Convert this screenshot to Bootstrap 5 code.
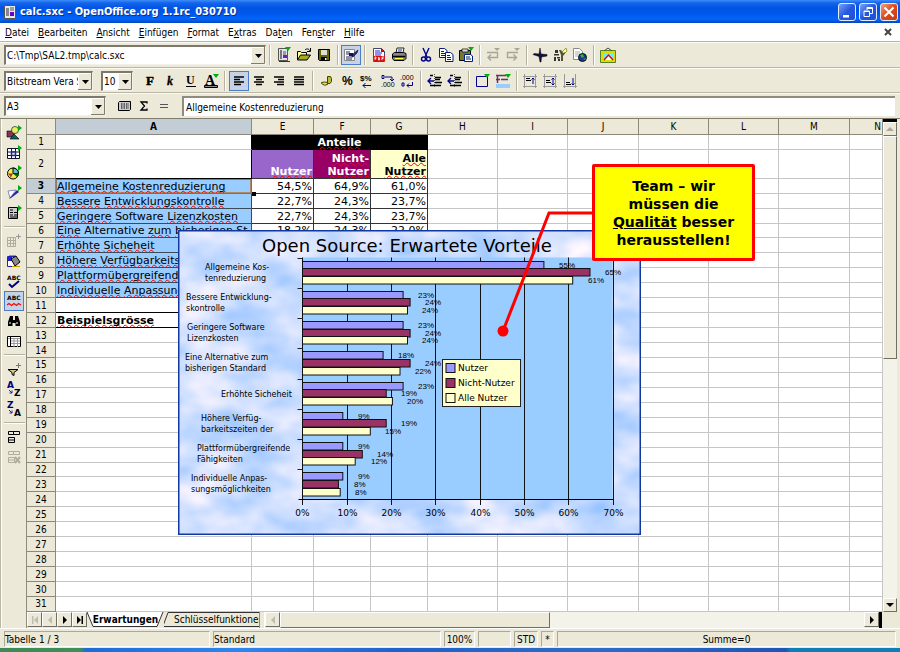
<!DOCTYPE html>
<html lang="de">
<head>
<meta charset="utf-8">
<meta name="viewport" content="width=device-width, initial-scale=1">
<title>calc.sxc - OpenOffice.org 1.1rc_030710</title>
<link rel="stylesheet" href="https://cdn.jsdelivr.net/npm/bootstrap@5.3.0/dist/css/bootstrap.min.css">
<style>
:root{--face:#ece9d8;--lo:#aca899;--ui:"DejaVu Sans Condensed","DejaVu Sans",sans-serif}
body{background:var(--face);font-family:var(--ui);font-size:10px;line-height:13px;color:#000}
button,input,select{font:inherit;color:inherit}
.titlebar{height:23px;background:linear-gradient(#3c8cf8 0,#1464ec 3px,#0054e3 8px,#0058ee 14px,#0366fb 19px,#0148c4 23px);color:#fff;padding:0 2px 0 4px}
.titlebar h1{font-size:11px;line-height:16px;font-weight:bold;text-shadow:1px 1px #0a2f8c;font-family:"DejaVu Sans Condensed",sans-serif}
.wbtn{width:18px;height:18px;border:1px solid #e4edfc;border-radius:3px;padding:0;background:linear-gradient(135deg,#7aa2f4,#2558e0 50%,#1c50d8)}
.wbtn.shut{background:linear-gradient(135deg,#f0a080,#dc4a20 50%,#c43c10)}
.wins{gap:3px}
.menubar{height:19px;background:#fff;border-bottom:1px solid #b8b5a6;padding:0 8px 0 5px}
.menus{gap:9px}
.menubar a{color:#000;text-decoration:none}
.tbar{height:26px;border-bottom:1px solid #bab7a8;border-top:1px solid #fbfaf5;padding-left:4px}
.tbar.mid{height:25px}
.tb{width:20px;height:20px;padding:1px;border:1px solid transparent;background:none;flex:none;display:flex;align-items:center;justify-content:center}
.tb.on{background:#c6d3e6;border-color:#4a7cc8}
.tb svg{width:16px;height:16px;display:block}
.vr2{width:7px;height:20px;flex:none;background:linear-gradient(90deg,transparent 3px,#b5b2a3 3px,#b5b2a3 4px,#fff 4px,#fff 5px,transparent 5px)}
.vr2.w8{width:8px}
.drop{appearance:none;height:20px;border:1px solid;border-color:#7c796c #f4f2e8 #f4f2e8 #7c796c;border-top-width:2px;border-left-width:2px;border-radius:0;padding:0 14px 0 1px;background:#fff url("data:image/svg+xml,%3Csvg xmlns='http://www.w3.org/2000/svg' width='14' height='17'%3E%3Crect width='14' height='17' fill='%23ece9d8'/%3E%3Cpath d='M0.5 17V.5H14' fill='none' stroke='%23fff'/%3E%3Cpath d='M13.500 0V16.500H0' fill='none' stroke='%23807d70'/%3E%3Cpath d='M4 7h7l-3.500 4z'/%3E%3C/svg%3E") right center no-repeat;overflow:hidden;white-space:nowrap}
.w-url{width:262px}.w-face{width:89px}.w-size{width:32px}.w-ref{width:102px}
.fx{height:20px;border:0;border-top:2px solid #8f8c7e;border-left:2px solid #8f8c7e;padding:0 2px;background:#fff;min-width:0;margin-right:5px}
.side{width:27px;padding:4px 0 0 3px;border-left:1px solid #b8b5a6;border-right:1px solid #8f8c7e;box-shadow:inset 1px 0 #fff}
.hr2{height:8px;width:21px;background:linear-gradient(transparent 3px,#b5b2a3 3px,#b5b2a3 4px,#fff 4px,#fff 5px,transparent 5px)}
.work{border-top:1px solid #807d70;min-height:0}
.pane{min-width:0;min-height:0}
.sheetwrap{background:#fff;min-width:0}
.sheet{table-layout:fixed;width:100%;height:100%;border-collapse:separate;border-spacing:0;font-family:"DejaVu Sans",sans-serif;font-size:11px;line-height:13px}
.sheet th,.sheet td{padding:0 1px;border-right:1px solid #c6c6c6;border-bottom:1px solid #c6c6c6;white-space:nowrap;overflow:hidden;vertical-align:bottom;height:14px}
.sheet th{background:var(--face);border-color:#8c897c;text-align:center;font:normal 10px/13px var(--ui);vertical-align:middle}
.sheet thead th{height:16px}
.sheet .sel{background:#c3cdd6;font-weight:bold}
.sheet tr.tall td{height:27px}
.sheet td.area{background:#99ccff;border-color:#3c4a5c}
.sheet td.num{text-align:right;border-color:#333}
.sheet td.hd{font-weight:bold;text-align:right;line-height:13px;border-color:#333}
.sheet td.black{background:#000;color:#fff;text-align:center;border-color:#000}
.sheet td.c1{background:#9966cc;color:#fff}.sheet td.c2{background:#990066;color:#fff}.sheet td.c3{background:#ffffcc}
.sheet td.line{border-bottom-color:#000}
.sheet td.redge{border-right-color:#000}
.sheet td.cursor{box-shadow:inset 0 1px #8a7a6c,inset 1px 0 #8a7a6c,inset -1px -1px #b08a64;border-color:#8a6a50}
.colr{width:29px}.colA{width:196px}.colE{width:62px}.colF{width:57px}.colw{width:70px}.colx{width:71px}
.sp{text-decoration:underline wavy #f00 1px;text-underline-offset:0;text-decoration-skip-ink:none}
.chart{left:151px;top:111px;width:463px;height:305px}
.grip{left:225px;top:73px;width:4px;height:4px;background:#000}
.link{left:0;top:0;width:600px;height:240px;pointer-events:none}
.note{left:565px;top:45px;width:163px;height:97px;background:#ff0;border:3px solid #f00;border-radius:2px;font:bold 14px/18px "DejaVu Sans",sans-serif;text-align:center}
.vs{width:14px;background:#f3f3ea;border-top:3px solid #000}
.sb{width:14px;height:14px;border:1px solid;border-color:#fff #716f64 #716f64 #fff;background:var(--face);padding:0;display:flex;align-items:center;justify-content:center;flex:none}
.sb svg{width:8px;height:8px}
.thumb{border:1px solid;border-color:#fff #716f64 #716f64 #fff;background:var(--face);flex:none}
.vthumb{height:223px}
.hthumb{width:270px}
.tabs{height:16px;background:var(--face)}
.tabs .sb{width:15px;height:15px}
.shtab{border:0;padding:0;background:none;position:relative;height:15px;flex:none}
.shtab svg{position:absolute;left:0;top:0;width:100%;height:100%}
.shtab span{position:relative}
.t1{width:77px;font-weight:bold}.t2{width:95px;overflow:hidden;white-space:nowrap;padding-left:10px}
.split{width:6px;border-left:1px solid #8f8c7e;border-right:1px solid #fff;flex:none}
.track{background:#f3f3ea}
.edge{width:3px;flex:none}
.status{height:20px;padding:1px 4px 1px 4px;gap:3px;border-top:1px solid #fff}
.status>div{border:1px solid;border-color:#aca899 #fff #fff #aca899;height:16px;line-height:16px;white-space:nowrap;flex:none}
.s1{width:206px}.s2{width:228px}.s3{width:31px}.s4{width:33px}.s5{width:24px}.s6{width:13px}
.status .s7{flex:1}
.desk{height:4px;background:linear-gradient(90deg,#3d8a54 0,#3f8f58 80px,#1c6cd6 86px,#2e86ee 240px,#1e62c8 400px,#2c6cc8 600px,#1d56b4 786px,#0e7eb4 790px)}
</style>
<script src="https://cdn.jsdelivr.net/npm/bootstrap@5.3.0/dist/js/bootstrap.bundle.min.js"></script>
</head>
<body class="vh-100 d-flex flex-column overflow-hidden">
<header class="titlebar d-flex align-items-center">
  <svg width="12" height="14" viewBox="0 0 12 14" class="me-1"><path d="M.5.5h11v13H.5z" fill="#e8e8f0" stroke="#555"/><path d="M2 3h3v8H2z" fill="#888"/><path d="M6 3h4M6 5h4" stroke="#555"/><path d="M6 7h4v4H6z" fill="#60c"/></svg>
  <h1 class="m-0 flex-grow-1">calc.sxc - OpenOffice.org 1.1rc_030710</h1>
  <div class="wins d-flex">
    <button class="wbtn" aria-label="Minimieren"><svg class="d-block" width="16" height="16" viewBox="0 0 16 16"><path d="M4 11h6v2.500H4z" fill="#fff"/></svg></button>
    <button class="wbtn" aria-label="Wiederherstellen"><svg class="d-block" width="16" height="16" viewBox="0 0 16 16" fill="none" stroke="#fff"><path d="M4 7h5.500v5.500H4zM4 7.500h5.500M7 6V3.500h5.500V9.500H10M7 4.500h5.500"/></svg></button>
    <button class="wbtn shut" aria-label="Schließen"><svg class="d-block" width="16" height="16" viewBox="0 0 16 16"><path d="M3.500 3.500l9 9m0-9l-9 9" stroke="#fff" stroke-width="2"/></svg></button>
  </div>
</header>
<nav class="menubar d-flex align-items-center">
  <div class="menus d-flex flex-grow-1">
  <a href="#"><u>D</u>atei</a><a href="#"><u>B</u>earbeiten</a><a href="#"><u>A</u>nsicht</a><a href="#"><u>E</u>infügen</a><a href="#"><u>F</u>ormat</a><a href="#">E<u>x</u>tras</a><a href="#">Da<u>t</u>en</a><a href="#">Fen<u>s</u>ter</a><a href="#"><u>H</u>ilfe</a></div>
  <a href="#" aria-label="Dokument schließen"><svg width="8" height="8" viewBox="0 0 8 8" class="d-block"><path d="M1 1l6 6m0-6L1 7" stroke="#444" stroke-width="2"/></svg></a>
</nav>

<div class="tbar d-flex align-items-center">
  <select class="drop w-url" aria-label="URL"><option>C:\Tmp\SAL2.tmp\calc.sxc</option></select><i class="vr2 w8"></i>
  <button class="tb" aria-label="Neu"><svg viewBox="0 0 16 16"><path d="M2.500 1.500h9v12h-9z" fill="#e4e4ec" stroke="#555"/><path d="M4 3h2v9H4z" fill="#777"/><path d="M7 5h3M7 7h3" stroke="#555"/><path d="M7 8h4v3H7z" fill="#62b"/><path d="M3 14.500h11" stroke="#333"/><path d="M9 0h6l-3 4z" fill="#0a1"/></svg></button>
  <button class="tb" aria-label="Öffnen"><svg viewBox="0 0 16 16"><path d="M1.500 13V4.500h3l1 1h5V8" fill="#ff9" stroke="#000"/><path d="M1.500 13l3-5h10l-3.500 5z" fill="#aa2" stroke="#000"/><path d="M9 3c2-2 4-1 5 1M14.500 1v3.500H11" fill="none" stroke="#000"/></svg></button>
  <button class="tb" aria-label="Speichern"><svg viewBox="0 0 16 16"><path d="M2.500 2.500h11v11h-10l-1-1z" fill="#660" stroke="#000"/><path d="M5 3h6v5H5z" fill="#ddd"/><path d="M5 10h6v3.500H5z" fill="#000"/><path d="M9 11h1.500v2H9z" fill="#fff"/></svg></button><i class="vr2"></i>
  <button class="tb on" aria-label="Bearbeiten"><svg viewBox="0 0 16 16"><path d="M1.500 2.500h10v11h-10z" fill="#fff" stroke="#888"/><path d="M3 5h4M3 7h3M3 10h6M3 12h6" stroke="#225"/><path d="M6 6h4v3H6z" fill="#116"/><path d="M9 10l1-3 5-4-1 3-4 4z" fill="#337" stroke="#003" stroke-width=".6"/></svg></button><i class="vr2 w8"></i>
  <button class="tb" aria-label="PDF"><svg viewBox="0 0 16 16"><path d="M2.500 1.500h8l3 3v10h-11z" fill="#fff" stroke="#447"/><path d="M10 1v4h4z" fill="#c00"/><path d="M4 4h5M4 6h7M4 8h6" stroke="#22c"/><path d="M2 9h12v5H2z" fill="#d11"/><path d="M4 13v-3h1v1.500H4M7.500 10v3h1v-2.500M11 13v-3h2m-2 1.500h1.500" stroke="#fff" stroke-width=".8" fill="none"/></svg></button>
  <button class="tb" aria-label="Drucken"><svg viewBox="0 0 16 16"><path d="M5 6l1-5h7l-1 5" fill="#fff" stroke="#222"/><path d="M7 3h4M6.500 5h4" stroke="#22a"/><path d="M1.500 7l2-1.500h9L15 6.500v5l-2 2H3l-1.500-2z" fill="#888" stroke="#000"/><path d="M2 9.500h12" stroke="#000" stroke-width="1.500"/><path d="M4 11h8v1H4z" fill="#ff4"/></svg></button><i class="vr2"></i>
  <button class="tb" aria-label="Ausschneiden"><svg viewBox="0 0 16 16" fill="none" stroke="#00008b" stroke-width="1.400"><path d="M5 1l4 9M11 1L7 10"/><circle cx="5.500" cy="12" r="2"/><circle cx="10.500" cy="12" r="2"/></svg></button>
  <button class="tb" aria-label="Kopieren"><svg viewBox="0 0 16 16" fill="#fff" stroke="#00207c"><path d="M1.500 1.500h5l2.500 2v7H1.500z"/><path d="M3 4.500h3M3 6.500h4M3 8.500h4"/><path d="M7.500 5.500h5l2.500 2v7H7.500z"/><path d="M9 8.500h3M9 10.500h4M9 12.500h4"/></svg></button>
  <button class="tb" aria-label="Einfügen"><svg viewBox="0 0 16 16"><path d="M1.500 3.500h11v10h-11z" fill="#773" stroke="#000"/><path d="M4 2h6v3H4z" fill="#ddd" stroke="#000" stroke-width=".7"/><path d="M6.500 7.500h6l2 1.500v5.500h-8z" fill="#fff" stroke="#002080"/><path d="M8 10h4M8 12h5" stroke="#002080"/><path d="M10 0h6l-3 4z" fill="#0a1"/></svg></button><i class="vr2"></i>
  <button class="tb" aria-label="Rückgängig"><svg viewBox="0 0 16 16" fill="none" stroke="#a8a596" stroke-width="1.400"><path d="M2 5.500h10.500v5H3M6 7.500l-3 3 3 3"/><path d="M9 1h6l-3 3z" fill="#a8a596" stroke="none"/></svg></button>
  <button class="tb" aria-label="Wiederherstellen"><svg viewBox="0 0 16 16" fill="none" stroke="#a8a596" stroke-width="1.400"><path d="M13 5.500H2.500v5H11M8.500 7.500l3 3-3 3"/><path d="M9 1h6l-3 3z" fill="#a8a596" stroke="none"/></svg></button><i class="vr2"></i>
  <button class="tb" aria-label="Navigator"><svg viewBox="0 0 16 16"><path d="M8 1l1 6 6 .5v1.500l-5.500 1L9 15H8L7 9.500 1 7.500 2 6.500l5 .5z" fill="#114" stroke="#000" stroke-width=".5"/></svg></button>
  <button class="tb" aria-label="Stylist"><svg viewBox="0 0 16 16"><path d="M3 3h3v3H3zM2 7h5v1.500H2zM2 10h2v4H2zM5 10h3v1.500H5zM6 12h2v2H6z" fill="#333"/><path d="M10 5l4-4 1 3-4 4z" fill="#ff6" stroke="#773" stroke-width=".7"/><path d="M7 3h2l2 3 3-1-3 4v5H9V8z" fill="#553"/></svg></button>
  <button class="tb" aria-label="Hyperlink"><svg viewBox="0 0 16 16"><path d="M1.500 1.500h6l3 3v8h-9z" fill="#fff" stroke="#888"/><path d="M3 5h5M3 7h5M3 9h3" stroke="#aaa"/><circle cx="10.500" cy="10.500" r="4" fill="#238" stroke="#012"/><path d="M8 8l3-1 1 3-2 1zM11 12l3-1-1 2z" fill="#2b3"/></svg></button><i class="vr2 w8"></i>
  <button class="tb" aria-label="Gallery"><svg viewBox="0 0 16 16"><path d="M4 4l4-3 4 3" fill="none" stroke="#444"/><path d="M2 5h12v9H2z" fill="#6ef" stroke="#dd0" stroke-width="2"/><path d="M4 13l4.500-5 4.500 5" fill="#fff" stroke="#c11" stroke-width="1.500"/><path d="M.5 3.500h15v12H.5z" fill="none" stroke="#360" stroke-width=".8"/></svg></button>
</div>

<div class="tbar mid d-flex align-items-center">
  <select class="drop w-face" aria-label="Schriftart"><option>Bitstream&nbsp;Vera&nbsp;S</option></select>
  <select class="drop w-size mx-2" aria-label="Schriftgröße"><option>10</option></select>
  <button class="tb" aria-label="Fett"><svg viewBox="0 0 16 16"><text x="3" y="12" font-family="Liberation Serif,serif" font-weight="bold" font-size="13" stroke="#000" stroke-width=".5">F</text></svg></button>
  <button class="tb" aria-label="Kursiv"><svg viewBox="0 0 16 16"><text x="4" y="12" font-family="Liberation Serif,serif" font-weight="bold" font-style="italic" font-size="12" stroke="#000" stroke-width=".3">k</text></svg></button>
  <button class="tb" aria-label="Unterstrichen"><svg viewBox="0 0 16 16"><text x="3" y="11" font-family="Liberation Serif,serif" font-weight="bold" font-size="12">U</text><path d="M3 13.500h10" stroke="#000"/></svg></button>
  <button class="tb" aria-label="Zeichenfarbe"><svg viewBox="0 0 16 16"><text x="2" y="12" font-family="Liberation Serif,serif" font-weight="bold" font-size="14">A</text><path d="M1.500 12.500h13v2h-13z" fill="#888" stroke="#000"/><path d="M10 1h6l-3 4z" fill="#0a1"/></svg></button><i class="vr2 w8"></i>
  <button class="tb on" aria-label="Linksbündig"><svg viewBox="0 0 16 16" stroke="#000" stroke-width="1.300"><path d="M3 4h10M3 6.500h6M3 9h10M3 11.500h7"/></svg></button>
  <button class="tb" aria-label="Zentriert"><svg viewBox="0 0 16 16" stroke="#000" stroke-width="1.300"><path d="M3 4h10M5 6.500h6M3 9h10M5 11.500h6"/></svg></button>
  <button class="tb" aria-label="Rechtsbündig"><svg viewBox="0 0 16 16" stroke="#000" stroke-width="1.300"><path d="M3 4h10M7 6.500h6M3 9h10M6 11.500h7"/></svg></button>
  <button class="tb" aria-label="Blocksatz"><svg viewBox="0 0 16 16" stroke="#000" stroke-width="1.300"><path d="M3 4h10M3 6.500h10M3 9h10M3 11.500h10"/></svg></button><i class="vr2 w8"></i>
  <button class="tb" aria-label="Währung"><svg viewBox="0 0 16 16"><path d="M8.500 3.500q4-1 4 2v3q-1 3-4 2z" fill="#bb3" stroke="#440"/><path d="M2.500 9.500q3-1 6 0v2q-3 2-6-1z" fill="#dd5" stroke="#440"/></svg></button>
  <button class="tb" aria-label="Prozent"><svg viewBox="0 0 16 16"><text x="3" y="12" font-family="Liberation Sans,sans-serif" font-weight="bold" font-size="12">%</text></svg></button>
  <button class="tb" aria-label="Standardformat"><svg viewBox="0 0 16 16"><text x="1" y="8" font-family="Liberation Sans,sans-serif" font-weight="bold" font-size="8">$%</text><path d="M4 12.500h8M6.500 10L4 12.500 6.500 15" stroke="#008" fill="none"/></svg></button>
  <button class="tb" aria-label="Dezimalstelle hinzufügen"><svg viewBox="0 0 16 16"><text x="2" y="14" font-family="Liberation Sans,sans-serif" font-size="7">.000</text><path d="M3 2.500h2v3H3zM6 4h7v4M11 6l2 2 2-2" stroke="#008" fill="none"/></svg></button>
  <button class="tb" aria-label="Dezimalstelle löschen"><svg viewBox="0 0 16 16"><text x="1" y="7" font-family="Liberation Sans,sans-serif" font-size="7">.000</text><path d="M3 10h2v3H3zM13.500 9v3.500H8M10 10.500l-2 2 2 2" stroke="#008" fill="none"/></svg></button><i class="vr2 w8"></i>
  <button class="tb" aria-label="Einzug vermindern"><svg viewBox="0 0 16 16"><path d="M8 4.500h6M8 6.500h5M8 9.500h7M3 12.500h11M3 2.500h3" stroke="#000" stroke-width="1.500"/><path d="M1 8h6M4 5L1 8l3 3" stroke="#008" stroke-width="1.300" fill="none"/><path d="M7.500 1v14" stroke="#555" stroke-dasharray="1"/></svg></button>
  <button class="tb" aria-label="Einzug erhöhen"><svg viewBox="0 0 16 16"><path d="M8 4.500h6M8 6.500h5M8 9.500h7M3 12.500h11M3 2.500h3" stroke="#000" stroke-width="1.500"/><path d="M1 8h6M4 5L1 8l3 3" stroke="#008" stroke-width="1.300" fill="none"/><path d="M7.500 1v14" stroke="#555" stroke-dasharray="1"/></svg></button><i class="vr2 w8"></i>
  <button class="tb" aria-label="Umrandung"><svg viewBox="0 0 16 16"><path d="M1.500 3.500h11v10h-11z" fill="none" stroke="#009"/><path d="M9 1h6l-3 4z" fill="#0a1"/></svg></button>
  <button class="tb" aria-label="Hintergrundfarbe"><svg viewBox="0 0 16 16"><path d="M1 11h14v4H1z" fill="#99ccff"/><path d="M1 2.500h10M2.500 2v8M1 6.500h4M6 6.500h7" stroke="#636" stroke-width="1.500"/><path d="M10 1h6l-3 4z" fill="#0a1"/></svg></button><i class="vr2"></i>
  <button class="tb" aria-label="Oben ausrichten"><svg viewBox="0 0 16 16"><path d="M1 3.500h14M1 13.500h14M2.500 1v14M13.500 1v14" stroke="#999"/><path d="M4 5.500h4M4 7.500h5" stroke="#000"/><path d="M11 5v6M9.500 6.500L11 5l1.500 1.500" stroke="#009" fill="none"/></svg></button>
  <button class="tb" aria-label="Mitte ausrichten"><svg viewBox="0 0 16 16"><path d="M1 3.500h14M1 13.500h14M2.500 1v14M13.500 1v14" stroke="#999"/><path d="M4 7.500h4M4 9.500h5" stroke="#000"/><path d="M11 5v7M9.500 6.500L11 5l1.500 1.500M9.500 10.500L11 12l1.500-1.500" stroke="#009" fill="none"/></svg></button>
  <button class="tb" aria-label="Unten ausrichten"><svg viewBox="0 0 16 16"><path d="M1 13.500h14M2.500 1v14M13.500 1v14" stroke="#999"/><path d="M4 9.500h4M4 11.500h5" stroke="#000"/><path d="M11 5v7M9.500 10.500L11 12l1.500-1.500" stroke="#009" fill="none"/></svg></button>
</div>

<div class="tbar mid d-flex align-items-center border-bottom-0">
  <select class="drop w-ref me-2" aria-label="Tabellenbereich"><option>A3</option></select>
  <button class="tb" aria-label="Funktionen"><svg viewBox="0 0 16 16"><path d="M3.500 3.500h11v8l-1 1h-11v-8z" fill="#ccc" stroke="#000"/><path d="M5 6h8M5 8h8M5 10h8" stroke="#000" stroke-dasharray="1.500 1"/></svg></button>
  <button class="tb" aria-label="Summe"><svg viewBox="0 0 16 16"><path d="M11 5.500V4H5l3.500 4L5 12h6v-1.500" fill="none" stroke="#000" stroke-width="1.300"/></svg></button>
  <button class="tb me-2" aria-label="Funktion"><svg viewBox="0 0 16 16"><path d="M4 6.500h8M4 9.500h8" stroke="#555"/></svg></button>
  <input class="fx flex-grow-1" aria-label="Eingabezeile" value="Allgemeine Kostenreduzierung">
</div>

<div class="work d-flex flex-grow-1">
  <aside class="side flex-shrink-0">
    <button class="tb" aria-label="Einfügen"><svg viewBox="0 0 16 16"><path d="M1 6h7v6H1z" fill="#835" stroke="#000" stroke-width=".6"/><circle cx="9" cy="5" r="3.500" fill="#ee6" stroke="#000" stroke-width=".6"/><path d="M4 14l4-5 5 5z" fill="#066" stroke="#000" stroke-width=".6"/><path d="M12 0l4 3-4 3z" fill="#0a1"/></svg></button>
    <button class="tb" aria-label="Zellen einfügen"><svg viewBox="0 0 16 16"><path d="M1.500 3.500h12v10h-12zM5.500 3v11M9.500 3v11M1 7h13M1 10.500h13" fill="#fff" stroke="#113"/><path d="M5.500 7h4v3.500h-4z" fill="#ee8" stroke="#22b" stroke-width="1.500"/><path d="M12 0l4 3-4 3z" fill="#0a1"/></svg></button>
    <button class="tb" aria-label="Objekt einfügen"><svg viewBox="0 0 16 16"><circle cx="7" cy="8.500" r="5.500" fill="#ee4" stroke="#000"/><path d="M7 8.500V3a5.500 5.500 0 015.500 5.500z" fill="#6bd" stroke="#000"/><path d="M7 8.500H1.500a5.500 5.500 0 013 4.800z" fill="#a33"/><path d="M7 8.500L11 12a5 5 0 002-3.500z" fill="#060"/><path d="M12 0l4 3-4 3z" fill="#0a1"/></svg></button>
    <button class="tb" aria-label="Zeichenfunktionen"><svg viewBox="0 0 16 16"><path d="M2 6l8-1-6 8z" fill="#fff" stroke="#88b"/><path d="M3 14l8-9 2 2-8 6z" fill="#22a"/><path d="M12 0l4 3-4 3z" fill="#0a1"/></svg></button>
    <button class="tb" aria-label="Formular"><svg viewBox="0 0 16 16"><path d="M2.500 2.500h9v11h-9z" fill="#ccc" stroke="#000"/><path d="M4 5h3M4 7.500h3M4 10h3M8 7.500h3M8 10h3M4 12h7" stroke="#000"/><path d="M12 0l4 3-4 3z" fill="#0a1"/></svg></button>
    <div class="hr2"></div>
    <button class="tb" aria-label="AutoFormat einfügen"><svg viewBox="0 0 16 16"><path d="M1.500 4.500h8v9h-8zM1 7.500h9M1 10.500h9M4.500 4v10M7.500 4v10" fill="none" stroke="#b0ad9e"/><path d="M10 3.500h5M12.500 1v5" stroke="#999"/></svg></button>
    <button class="tb" aria-label="AutoFormat"><svg viewBox="0 0 16 16"><path d="M1.500 3.500h8v10h-8z" fill="#fff" stroke="#22b"/><path d="M2 4h4v4H2z" fill="#22c"/><path d="M5 6l5-3 4 6-5 4z" fill="#888" stroke="#000"/><path d="M3 2.500h7M6 13.500h8" stroke="#c90"/></svg></button>
    <button class="tb" aria-label="Rechtschreibprüfung"><svg viewBox="0 0 16 16"><text x="1" y="7" font-family="DejaVu Sans,sans-serif" font-weight="bold" font-size="6">ABC</text><path d="M3 11l3 3 7-6" fill="none" stroke="#00007c" stroke-width="2"/></svg></button>
    <button class="tb on" aria-label="Automatische Rechtschreibprüfung"><svg viewBox="0 0 16 16"><text x="1" y="7" font-family="DejaVu Sans,sans-serif" font-weight="bold" font-size="6">ABC</text><path d="M1 12l2-1.500 2.500 2L8 10.500l2.500 2 2-2 2.500 1.500" fill="none" stroke="#f00" stroke-width="1.200"/></svg></button>
    <button class="tb" aria-label="Suchen"><svg viewBox="0 0 16 16"><path d="M4 3h3v4h2V3h3l2 6v4h-4.500v-3h-3v3H2V9z"/><path d="M4 9v2M11 9v2" stroke="#fff"/></svg></button>
    <button class="tb" aria-label="Datenquellen"><svg viewBox="0 0 16 16"><path d="M1.500 3.500h13v10h-13z" fill="#fff" stroke="#000"/><path d="M8 5v9M11.500 5v9M2 5.500h12M5 8h9M5 10.500h9" stroke="#999"/><path d="M4.500 3v11" stroke="#000"/></svg></button>
    <div class="hr2"></div>
    <button class="tb" aria-label="AutoFilter"><svg viewBox="0 0 16 16"><path d="M2 8.500h10l-4 3v3l-2-1v-2z" fill="#cc8" stroke="#000"/><path d="M10 4.500h5M12.500 2v5" stroke="#777"/></svg></button>
    <button class="tb" aria-label="Aufsteigend"><svg viewBox="0 0 16 16" font-family="DejaVu Sans,sans-serif" font-weight="bold" font-size="9"><text x="1" y="7" fill="#00007c">A</text><text x="8" y="15">Z</text><path d="M3 9l3 3M6 9.500V12H3.500" stroke="#22b" fill="none"/></svg></button>
    <button class="tb" aria-label="Absteigend"><svg viewBox="0 0 16 16" font-family="DejaVu Sans,sans-serif" font-weight="bold" font-size="9"><text x="1" y="7" fill="#00007c">Z</text><text x="8" y="15">A</text><path d="M3 9l3 3M6 9.500V12H3.500" stroke="#22b" fill="none"/></svg></button>
    <div class="hr2"></div>
    <button class="tb" aria-label="Gruppierung"><svg viewBox="0 0 16 16" fill="none" stroke="#000"><path d="M2.500 2.500h5v3h-5zM7.500 2.500h6v3h-6zM2.500 8.500h6v5h-6zM2.500 11h6"/></svg></button>
    <button class="tb" aria-label="Gruppierung aufheben"><svg viewBox="0 0 16 16" fill="none" stroke="#b0ad9e"><path d="M2.500 2.500h5v3h-5zM7.500 2.500h6v3h-6zM2.500 8.500h6v5h-6zM2.500 11h6"/><path d="M9 8l5 6m0-6l-5 6" stroke-width="2"/></svg></button>
  </aside>

  <main class="pane d-flex flex-column flex-grow-1">
    <div class="pane d-flex flex-grow-1">
      <div class="sheetwrap position-relative flex-grow-1 overflow-hidden">
        <table class="sheet">
          <colgroup><col class="colr"><col class="colA"><col class="colE"><col class="colF"><col class="colF"><col class="colw"><col class="colw"><col class="colx"><col class="colw"><col class="colw"><col class="colx"><col></colgroup>
          <thead><tr><th></th><th class="sel">A</th><th>E</th><th>F</th><th>G</th><th>H</th><th>I</th><th>J</th><th>K</th><th>L</th><th>M</th><th class="text-end">N</th></tr></thead>
          <tbody id="rows"></tbody>
        </table>
        <div class="grip position-absolute"></div>
        <svg id="chart" class="chart position-absolute" viewBox="0 0 463 305" font-family="DejaVu Sans,sans-serif" role="img" aria-label="Open Source: Erwartete Vorteile">
          <defs><filter id="cloud" x="0" y="0" width="1" height="1" color-interpolation-filters="sRGB"><feTurbulence type="fractalNoise" baseFrequency=".018 .028" numOctaves="3" seed="7"/><feColorMatrix values=".6 0 0 0 .5  .3 0 0 0 .72  0 0 0 0 1  0 0 0 0 1"/></filter></defs>
        </svg>
        <svg class="link position-absolute" viewBox="0 0 600 240"><path d="M566 94h-44L476 212" fill="none" stroke="#f00" stroke-width="3"/><circle cx="476" cy="212" r="5.500" fill="#f00"/></svg>
        <div class="note position-absolute d-flex align-items-center justify-content-center"><div>Team – wir<br>müssen die<br><u>Qualität</u> besser<br>herausstellen!</div></div>
      </div>
      <div class="vs d-flex flex-column flex-shrink-0">
        <button class="sb" aria-label="Nach oben"><svg viewBox="0 0 8 8"><path d="M0 6h8L4 2z" fill="#aca899"/></svg></button>
        <div class="thumb vthumb"></div>
        <button class="sb mt-auto" aria-label="Nach unten"><svg viewBox="0 0 8 8"><path d="M0 2h8L4 6z"/></svg></button>
      </div>
    </div>
    <div class="tabs d-flex">
      <button class="sb" aria-label="Erste Tabelle"><svg viewBox="0 0 8 8"><path d="M1 0h1.500v8H1zM7 0v8L3 4z" fill="#c0bdae"/></svg></button>
      <button class="sb" aria-label="Vorige Tabelle"><svg viewBox="0 0 8 8"><path d="M6 0v8L2 4z" fill="#c0bdae"/></svg></button>
      <button class="sb" aria-label="Nächste Tabelle"><svg viewBox="0 0 8 8"><path d="M2 0v8l4-4z"/></svg></button>
      <button class="sb" aria-label="Letzte Tabelle"><svg viewBox="0 0 8 8"><path d="M5.500 0H7v8H5.500zM1 0v8l4-4z"/></svg></button>
      <button class="shtab t1"><svg viewBox="0 0 77 15" preserveAspectRatio="none"><path d="M0 0l6 14h64l6-14z" fill="#fff"/><path d="M0 0l6 14.500h64L76 0" fill="none" stroke="#333"/></svg><span>Erwartungen</span></button>
      <button class="shtab t2"><svg viewBox="0 0 95 15" preserveAspectRatio="none"><path d="M-1 14L4 .5h91M0 14.500h95" fill="none" stroke="#333"/></svg><span>Schlüsselfunktionen</span></button>
      <div class="split"></div>
      <button class="sb" aria-label="Nach links"><svg viewBox="0 0 8 8"><path d="M6 0v8L2 4z" fill="#c0bdae"/></svg></button>
      <div class="thumb hthumb"></div>
      <div class="track flex-grow-1"></div>
      <button class="sb" aria-label="Nach rechts"><svg viewBox="0 0 8 8"><path d="M2 0v8l4-4z"/></svg></button>
      <div class="bg-black edge"></div><div class="sb border-0"></div>
    </div>
  </main>
  <div class="edge"></div>
</div>
<footer class="status d-flex align-items-center">
  <div class="s1">Tabelle 1 / 3</div><div class="s2">Standard</div><div class="s3 text-center">100%</div><div class="s4"></div><div class="s5 text-center">STD</div><div class="s6 text-center">*</div><div class="s7 text-center">Summe=0</div>
</footer>
<div class="desk"></div>

<script>
// A leading "~" marks a word that the spell checker underlines.
const mark = s => s.split(' ').map(w => w[0] === '~' ? `<span class="sp">${w.slice(1)}</span>` : w).join(' ');
const data = {
  3: ['~Allgemeine ~Kostenreduzierung', '54,5%', '64,9%', '61,0%'],
  4: ['~Bessere ~Entwicklungskontrolle', '22,7%', '24,3%', '23,7%'],
  5: ['~Geringere Software ~Lizenzkosten', '22,7%', '24,3%', '23,7%'],
  6: ['~Eine Alternative ~zum ~bisherigen St', '18,2%', '24,3%', '22,0%'],
  7: ['~Erhöhte ~Sicheheit', '22,7%', '18,9%', '20,3%'],
  8: ['~Höhere ~Verfügbarkeitszeiten der', '9,1%', '18,9%', '15,3%'],
  9: ['~Plattformübergreifende', '9,1%', '13,5%', '11,9%'],
  10: ['~Individuelle ~Anpassungsmögl', '9,1%', '8,1%', '8,5%']
};
const blank = n => '<td></td>'.repeat(n);
let html = '';
for (let r = 1; r <= 31; r++) {
  let c;
  if (r === 1) c = `<td class="redge"></td><td colspan="3" class="hd black">${mark('~Anteile')}</td>` + blank(7);
  else if (r === 2) c = `<td class="line redge"></td><td class="hd c1">${mark('~Nutzer')}</td><td class="hd c2">${mark('~Nicht-')}<br>${mark('~Nutzer')}</td><td class="hd c3">${mark('~Alle')}<br>${mark('~Nutzer')}</td>` + blank(7);
  else if (data[r]) c = `<td class="area${r === 3 ? ' cursor' : ''}">${mark(data[r][0])}</td>` + data[r].slice(1).map(v => `<td class="num">${v}</td>`).join('') + blank(7);
  else if (r === 11) c = '<td class="line"></td>' + '<td class="line"></td>'.repeat(3) + blank(7);
  else if (r === 12) c = `<td class="line fw-bold">${mark('~Beispielsgrösse')}</td>` + '<td class="line"></td>'.repeat(3) + blank(7);
  else c = blank(11);
  html += `<tr${r === 2 ? ' class="tall"' : ''}><th${r === 3 ? ' class="sel"' : ''}>${r}</th>${c}</tr>`;
}
document.getElementById('rows').innerHTML = html;

// Chart: category label lines with their left edge, bar values, value labels with their left edge.
const cats = [
  [['Allgemeine Kos-', 'tenreduzierung'], 27, [54.5, 64.9, 61], ['55%', '65%', '61%'], [381, 427, 410]],
  [['Bessere Entwicklung-', 'skontrolle'], 8, [22.7, 24.3, 23.7], ['23%', '24%', '24%'], [240, 247, 244]],
  [['Geringere Software', 'Lizenzkosten'], 9, [22.7, 24.3, 23.7], ['23%', '24%', '24%'], [240, 247, 244]],
  [['Eine Alternative zum', 'bisherigen Standard'], 7, [18.2, 24.3, 22], ['18%', '24%', '22%'], [220, 247, 237]],
  [['Erhöhte Sicheheit'], 43, [22.7, 18.9, 20.3], ['23%', '19%', '20%'], [240, 223, 229]],
  [['Höhere Verfüg-', 'barkeitszeiten der'], 23, [9.1, 18.9, 15.3], ['9%', '19%', '15%'], [180, 223, 207]],
  [['Plattformübergreifende', 'Fähigkeiten'], 19, [9.1, 13.5, 11.9], ['9%', '14%', '12%'], [180, 199, 193]],
  [['Individuelle Anpas-', 'sungsmöglichkeiten'], 13, [9.1, 8.1, 8.5], ['9%', '8%', '8%'], [180, 176, 177]]
];
const fills = ['#9999ff', '#993366', '#ffffcc'];
const x0 = 124.5, y0 = 27.5, kx = 4.43, ky = 30.25, yb = 269.5;
let s = `<rect width="463" height="305" filter="url(#cloud)"/><rect x=".75" y=".75" width="461.500" height="303.500" fill="none" stroke="#1238a0" stroke-width="1.500"/>
<rect x="${x0}" y="${y0}" width="310" height="242" fill="#99ccff"/>
<text x="84" y="22" font-size="18">Open Source: Erwartete Vorteile</text>`;
for (let i = 0; i <= 7; i++) {
  const x = Math.round(x0 + i * 10 * kx) + .5 - (i ? 0 : 1);
  s += `<path d="M${x} ${y0}V275" stroke="#111"/><text x="${x}" y="286" font-size="9" text-anchor="middle">${i * 10}%</text>`;
}
s += `<path d="M${x0 - 4} ${yb}H435" stroke="#000"/>`;
cats.forEach(([lines, lx, vals], i) => {
  const t = y0 + i * ky;
  s += `<path d="M${x0 - 5} ${Math.round(t) + .5}h5" stroke="#222"/>`;
  lines.forEach((l, k) => s += `<text x="${lx}" y="${Math.round(t) + (lines.length > 1 ? 12 + k * 11 : 18)}" font-size="8">${l}</text>`);
  vals.forEach((v, k) => s += `<rect x="${x0}" y="${Math.round(t + 3 + k * 7.7) + .5}" width="${(v * kx).toFixed(1)}" height="7.500" fill="${fills[k]}" stroke="#111"/>`);
});
cats.forEach(([, , , labs, px], i) => labs.forEach((l, k) => s += `<text x="${px[k]}" y="${Math.round(y0 + i * ky + 10 + k * 7.7)}" font-size="8" font-family="Liberation Sans,sans-serif">${l}</text>`));
s += `<rect x="264.500" y="129.500" width="78" height="47" fill="#ffffcc" stroke="#222"/>`;
['Nutzer', 'Nicht-Nutzer', 'Alle Nutzer'].forEach((l, k) => s += `<rect x="268" y="${133.5 + k * 15}" width="9" height="9" fill="${fills[k]}" stroke="#111"/><text x="280" y="${141 + k * 15}" font-size="9">${l}</text>`);
document.getElementById('chart').innerHTML += s;
</script>
</body>
</html>
